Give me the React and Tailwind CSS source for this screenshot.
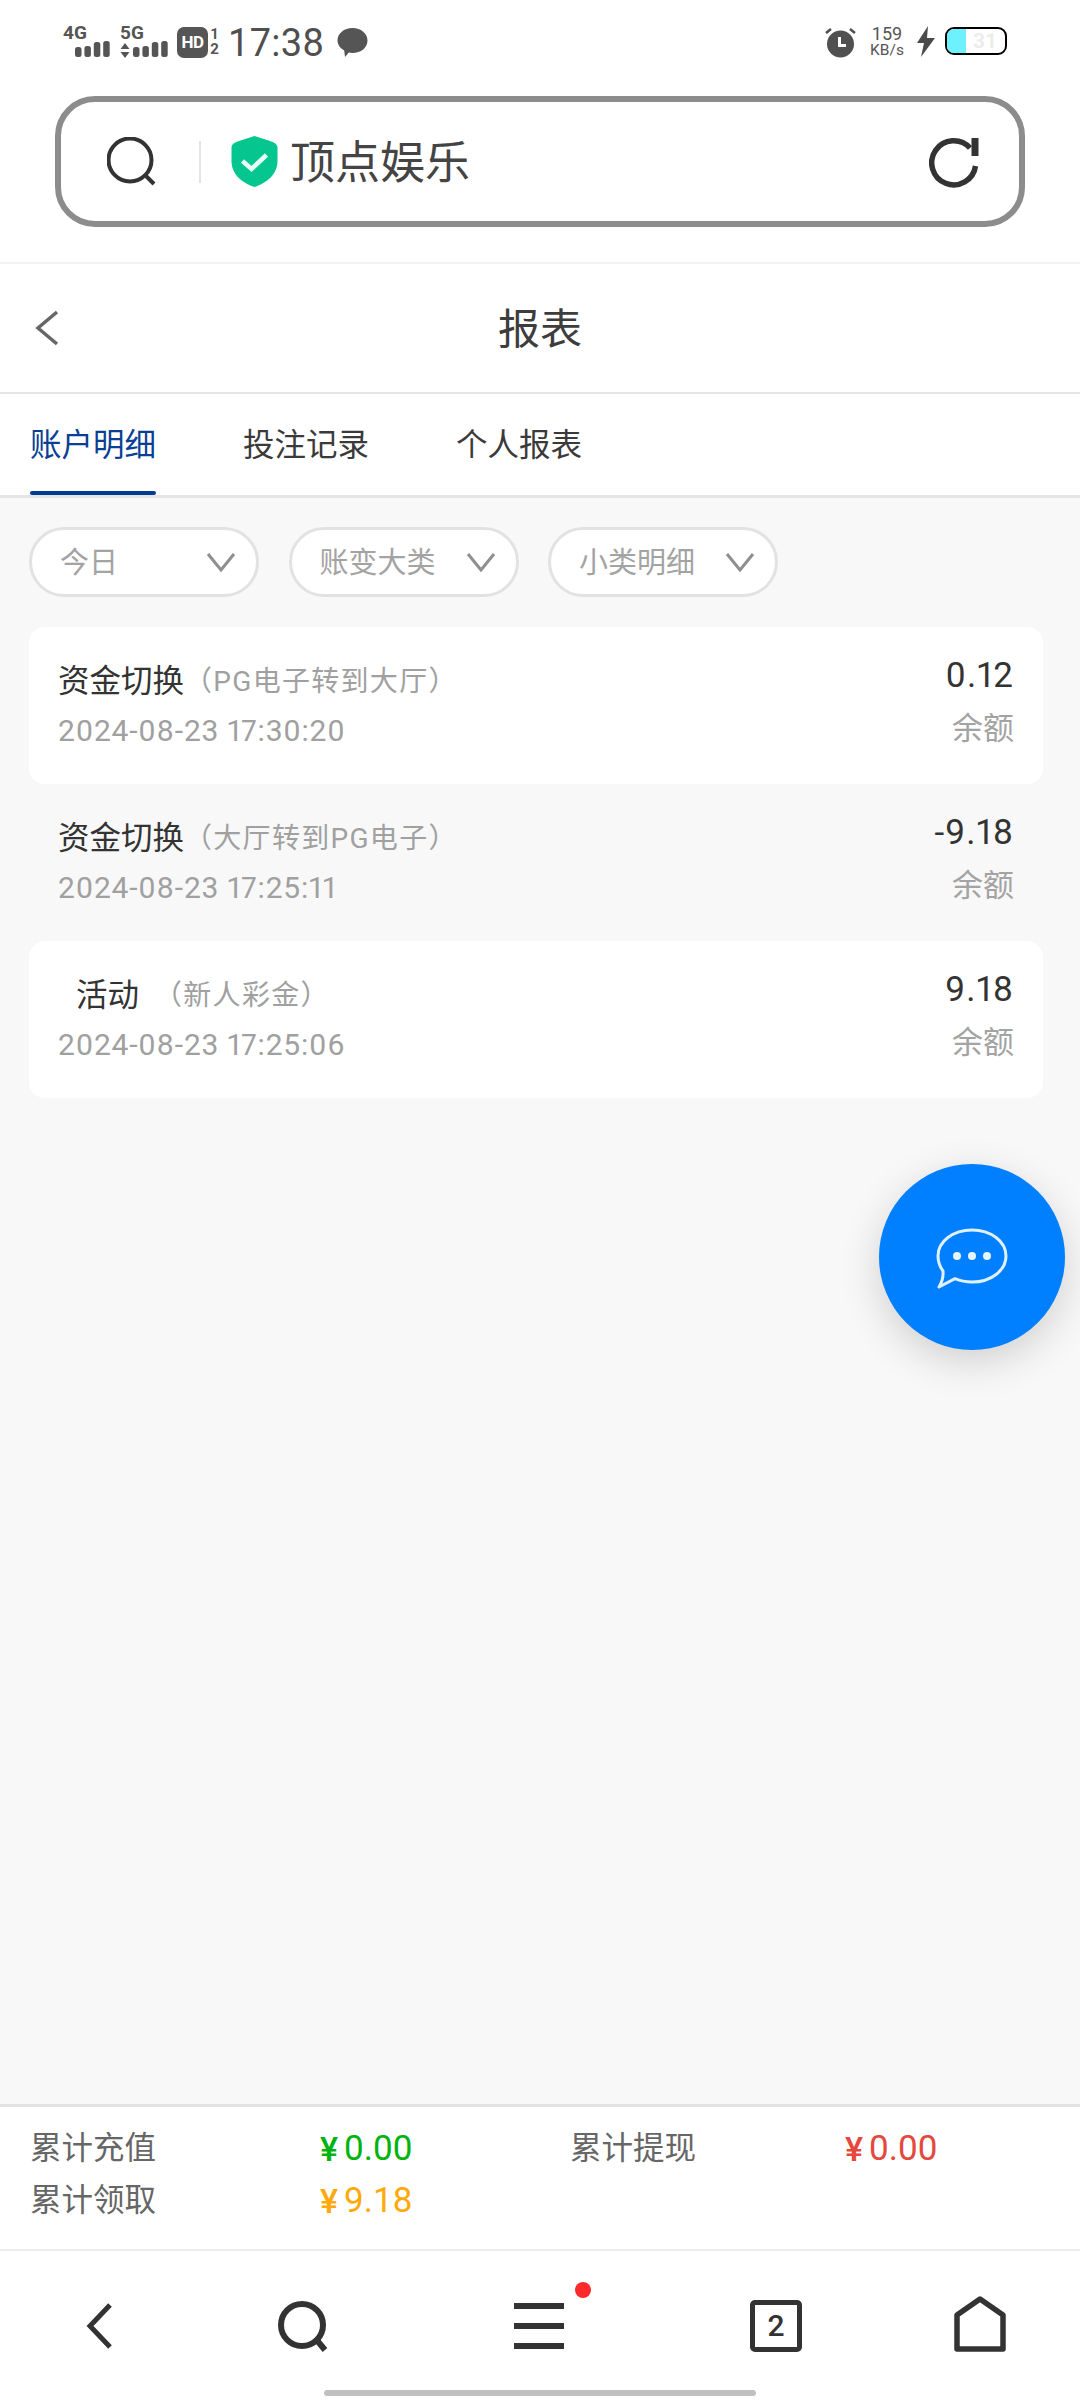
function Bars() {
  const hs = [10, 11, 15, 16];
  return (
    <svg width="36" height="16" viewBox="0 0 36 16" fill="#555">
      {hs.map((h, i) => (
        <rect key={i} x={i * 9.4} y={16 - h} width="6.500" height={h} rx="2.500" />
      ))}
    </svg>
  );
}

function StatusBar() {
  return (
    <div className="h-[75px] pt-[25px] pl-[63px] pr-[73px] flex items-start justify-between text-[#555555]">
      <div className="flex items-start">
        <div className="relative w-[57px] h-[32px]">
          <span className="absolute left-0 -top-[1px] text-[19px] leading-[17px] font-bold">4G</span>
          <div className="absolute left-[12px] top-[16px]"><Bars /></div>
        </div>
        <div className="relative w-[57px] h-[32px]">
          <span className="absolute left-0 -top-[1px] text-[19px] leading-[17px] font-bold">5G</span>
          <svg className="absolute left-0 top-[18px]" width="10" height="15" viewBox="0 0 10 15" fill="#555"><path d="M5 0l4.500 6h-9zM5 15L.5 9h9z" /></svg>
          <div className="absolute left-[13px] top-[16px]"><Bars /></div>
        </div>
        <div className="w-[31px] h-[31px] rounded-[7px] bg-[#555555] text-white text-[17px] leading-[31px] font-bold text-center mt-[2px] tracking-[-0.5px]">HD</div>
        <div className="flex flex-col items-center ml-[1px] mt-[2px] font-bold text-[15px] leading-[15px] w-[11px]"><span>1</span><span>2</span></div>
        <span className="ml-[8px] text-[38px] leading-[38px] -mt-[1px] font-normal tracking-[0.3px] text-[#4f4f4f]">17:38</span>
        <svg className="ml-[13px] mt-[2px]" width="31" height="31" viewBox="0 0 31 31" fill="#555"><path d="M15.500 1C24 1 30.500 6.500 30.500 13.500S24 26 15.500 26c-1.300 0-2.500-.1-3.700-.4L8 30l-.8-6.500C3.300 21.200.500 17.500.500 13.500.500 6.500 7 1 15.500 1z" /></svg>
      </div>
      <div className="flex items-start">
        <svg className="mt-[2px]" width="31" height="31" viewBox="0 0 31 31"><circle cx="15.500" cy="17" r="13.500" fill="#505050" /><path d="M1 6l5-4M30 6l-5-4" stroke="#505050" strokeWidth="2.500" /><path d="M13 10v10h8v-3h-5v-7z" fill="#fff" /></svg>
        <div className="ml-[12px] w-[38px] flex flex-col items-center text-[#555] font-normal">
          <span className="text-[18px] leading-[18px]">159</span>
          <span className="text-[15.500px] leading-[15px] whitespace-nowrap">KB/s</span>
        </div>
        <svg className="ml-[11px] mt-[1px]" width="18" height="31" viewBox="0 0 18 31" fill="#4a4a4a"><path d="M11 0L0 17h7L4 31l14-19h-8z" /></svg>
        <div className="relative ml-[10px] mt-[2px] w-[62px] h-[28px] rounded-[9px] border-2 border-black overflow-hidden bg-white">
          <div className="h-full w-[19px] bg-[#6cf1fd]" />
          <span className="absolute left-[26px] top-[0px] text-[21px] leading-[24px] text-[#ececec] font-bold">31</span>
        </div>
      </div>
    </div>
  );
}

function SearchBox() {
  return (
    <div className="mx-[55px] mt-[21px] h-[131px] border-[6px] border-[#8c8c8c] rounded-[40px] bg-white flex items-center pl-[46px] pr-[40px]">
      <svg width="50" height="50" viewBox="0 0 50 50" fill="none" stroke="#333" strokeWidth="4"><circle cx="23" cy="23" r="21.500" /><path d="M38 38l9 9" /></svg>
      <div className="ml-[42px] w-[2px] h-[42px] bg-[#e4e4e4]" />
      <svg className="ml-[30px]" width="47" height="51" viewBox="0 0 47 51"><path d="M23.500 0L39 5c4 1.200 7 3 7.500 6v14C46.500 38 36 47 23.500 51 11 47 .5 38 .5 25V11C1 8 4 6.200 8 5z" fill="#05c68f" /><path d="M11.500 25l9 8 15-14" fill="none" stroke="#e8fff8" strokeWidth="4.500" /></svg>
      <span className="ml-[12px] mt-[5px] text-[45px] leading-[50px] text-[#444444]">顶点娱乐</span>
      <svg className="ml-auto" width="50" height="52" viewBox="0 0 50 52" fill="none"><path d="M46.500 30A22 22 0 1 1 41 12" stroke="#333" strokeWidth="5.500" /><rect x="42.500" y="2" width="7" height="18" fill="#333" /></svg>
    </div>
  );
}

function Pill({ label }) {
  return (
    <div className="w-[230px] h-[70px] rounded-full border-[3px] border-[#e2e2e2] bg-white flex items-center justify-between pl-[28px] pr-[20px]">
      <span className="mt-[2px] text-[29px] leading-[34px] text-[#a3a3a3]">{label}</span>
      <svg width="30" height="20" viewBox="0 0 30 20" fill="none" stroke="#8f8f8f" strokeWidth="3"><path d="M2 2l13 16L28 2" /></svg>
    </div>
  );
}

function Row({ title, sub, date, amount, card, first }) {
  return (
    <div className={`h-[157px] px-[29px] rounded-[16px] flex justify-between ${card ? "bg-white" : ""}`}>
      <div className="pt-[36px]">
        <div className={`flex items-center h-[38px] ${first ? "pl-[18px]" : ""}`}>
          <span className="text-[31.500px] leading-[38px] text-[#333333]">{title}</span>
          <span className={`text-[28px] tracking-[1.300px] leading-[38px] text-[#a0a0a0] ${first ? "ml-[15px]" : ""}`}>{sub}</span>
        </div>
        <div className="mt-[12px] text-[30px] tracking-[0.800px] leading-[36px] text-[#a0a0a0] proportional-nums">{date}</div>
      </div>
      <div className="pt-[29px] flex flex-col items-end">
        <div className="text-[35px] tracking-[1px] leading-[40px] text-[#333333] proportional-nums">{amount}</div>
        <div className="mt-[13px] text-[31px] leading-[40px] text-[#a3a3a3]">余额</div>
      </div>
    </div>
  );
}

function Summary({ label, value, color }) {
  return (
    <>
      <span className="h-[38px] text-[31.500px] leading-[38px] text-[#666666]">{label}</span>
      <span className={`h-[38px] flex items-center whitespace-nowrap ${color}`}>
        <span className="text-[34px] leading-[38px] font-medium mr-[6px]">¥</span>
        <span className="text-[35px] leading-[38px]">{value}</span>
      </span>
    </>
  );
}

export default function App() {
  return (
    <div className="relative w-[1080px] h-[2400px] overflow-hidden flex flex-col bg-[#f8f8f8]" style={{ fontFamily: '"Roboto","Noto Sans CJK SC",sans-serif' }}>
      <div className="bg-white h-[264px] border-b-2 border-[#f3f3f3]">
        <StatusBar />
        <SearchBox />
      </div>

      <div className="relative h-[130px] bg-white border-b-2 border-[#e6e6e6] flex items-center justify-center">
        <svg className="absolute left-[35px] top-[46px]" width="24" height="36" viewBox="0 0 24 36" fill="none" stroke="#666" strokeWidth="3.500"><path d="M22 2L3 18l19 16" /></svg>
        <span className="mt-[4px] text-[42px] leading-[50px] text-[#3d3d3d]">报表</span>
      </div>

      <div className="h-[104px] bg-white border-b-[3px] border-[#e5e5e5] flex pl-[30px]">
        <div className="relative h-full w-[126px] pt-[32px] text-[31.500px] leading-[40px] text-[#0a3f94] whitespace-nowrap">
          账户明细
          <div className="absolute left-0 right-0 bottom-0 h-[4px] rounded-[2px] bg-[#003b96]" />
        </div>
        <div className="ml-[87px] pt-[32px] text-[31.500px] leading-[40px] text-[#3a3a3a] whitespace-nowrap">投注记录</div>
        <div className="ml-[87px] pt-[32px] text-[31.500px] leading-[40px] text-[#3a3a3a] whitespace-nowrap">个人报表</div>
      </div>

      <div className="relative flex-1">
        <div className="flex pl-[29px] pt-[29px] gap-[29.500px]">
          <Pill label="今日" />
          <Pill label="账变大类" />
          <Pill label="小类明细" />
        </div>
        <div className="ml-[29px] mr-[37px] mt-[30px]">
          <Row card title="资金切换" sub="（PG电子转到大厅）" date="2024-08-23 17:30:20" amount="0.12" />
          <Row title="资金切换" sub="（大厅转到PG电子）" date="2024-08-23 17:25:11" amount="-9.18" />
          <Row card first title="活动" sub="（新人彩金）" date="2024-08-23 17:25:06" amount="9.18" />
        </div>
        <div className="absolute left-[879px] top-[666px] w-[186px] h-[186px] rounded-full bg-[#007fff] shadow-[0_12px_40px_rgba(0,0,0,0.16)] flex items-center justify-center">
          <svg className="mt-[3px]" width="74" height="64" viewBox="0 0 74 64" fill="none"><path d="M37 3c19 0 34 11.500 34 26S56 55 37 55c-6 0-12-1.200-17-3.300L4 60c3-5 4.500-11 4-16C5 40 3 35 3 29 3 14.500 18 3 37 3z" stroke="#dff1ff" strokeWidth="3" strokeLinejoin="round" /><circle cx="22" cy="29" r="4" fill="#e6f4ff" /><circle cx="37" cy="29" r="4" fill="#e6f4ff" /><circle cx="52" cy="29" r="4" fill="#e6f4ff" /></svg>
        </div>
      </div>

      <div className="h-[147px] bg-white border-t-[3px] border-b-2 border-t-[#e3e3e3] border-b-[#ececec] pl-[30px] pt-[23px]">
        <div className="grid grid-cols-[290px_250px_275px_1fr] gap-y-[14px]">
          <Summary label="累计充值" value="0.00" color="text-[#00b30f]" />
          <Summary label="累计提现" value="0.00" color="text-[#e5483c]" />
          <Summary label="累计领取" value="9.18" color="text-[#ffa90a]" />
        </div>
      </div>

      <div className="relative h-[149px] bg-white">
        <div className="flex items-start pt-[40px] pl-[84px]">
          <svg className="mt-[11px]" width="30" height="48" viewBox="0 0 30 48" fill="none" stroke="#333" strokeWidth="5"><path d="M26 3L6 24l20 21" /></svg>
          <svg className="ml-[164px] mt-[9px]" width="52" height="52" viewBox="0 0 52 52" fill="none" stroke="#333" strokeWidth="6"><circle cx="24" cy="25" r="21" /><path d="M37 38l10 12" /></svg>
          <div className="relative ml-[184px] mt-[12px] w-[50px] h-[46px] flex flex-col justify-between">
            <div className="h-[6px] bg-[#333]" />
            <div className="h-[6px] bg-[#333]" />
            <div className="h-[6px] bg-[#333]" />
            <div className="absolute left-[61px] -top-[21px] w-[16px] h-[16px] rounded-full bg-[#ff2b2b]" />
          </div>
          <div className="ml-[186px] mt-[9px] w-[52px] h-[52px] rounded-[5px] border-[5px] border-[#333] flex items-center justify-center text-[30px] leading-[30px] font-medium text-[#333]">2</div>
          <svg className="ml-[152px] mt-[5px]" width="52" height="56" viewBox="0 0 52 56" fill="none" stroke="#333" strokeWidth="5.500" strokeLinejoin="round"><path d="M26 3L49 19v34H3V19z" /></svg>
        </div>
        <div className="absolute left-[324px] bottom-[4px] w-[432px] h-[6px] rounded-full bg-[#c0c0c0]" />
      </div>
    </div>
  );
}
